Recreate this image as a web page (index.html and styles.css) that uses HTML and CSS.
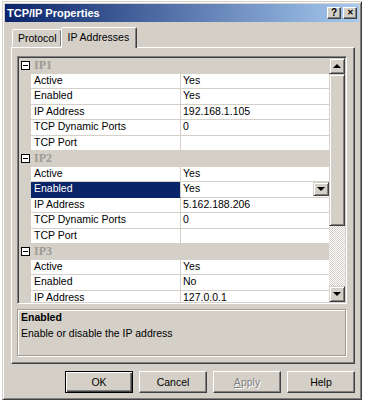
FILE: index.html
```html
<!DOCTYPE html>
<html>
<head>
    <title>TCP/IP Properties</title>
    <meta name="viewport" content="width=device-width, initial-scale=1">
    <link rel="stylesheet" href="styles.css">
</head>
<body>
    <div class="dialog">
        <div class="titlebar">
            <span class="title">TCP/IP Properties</span>
            <span class="caption-btn">?</span>
            <span class="caption-btn close">&#x2715;</span>
        </div>

        <div class="content">
            <div class="tabs">
                <div class="tab">Protocol</div>
                <div class="tab active">IP Addresses</div>
            </div>

            <div class="panel">
                <div class="grid">
                    <div class="rows">
                        <div class="row cat"><span class="margin"><i class="box"></i></span><span class="name">IP1</span><span class="value"></span></div>
                        <div class="row"><span class="margin"></span><span class="name">Active</span><span class="value">Yes</span></div>
                        <div class="row"><span class="margin"></span><span class="name">Enabled</span><span class="value">Yes</span></div>
                        <div class="row"><span class="margin"></span><span class="name">IP Address</span><span class="value">192.168.1.105</span></div>
                        <div class="row"><span class="margin"></span><span class="name">TCP Dynamic Ports</span><span class="value">0</span></div>
                        <div class="row"><span class="margin"></span><span class="name">TCP Port</span><span class="value"></span></div>

                        <div class="row cat"><span class="margin"><i class="box"></i></span><span class="name">IP2</span><span class="value"></span></div>
                        <div class="row"><span class="margin"></span><span class="name">Active</span><span class="value">Yes</span></div>
                        <div class="row selected"><span class="margin"></span><span class="name">Enabled</span><span class="value">Yes<span class="drop"><i class="arrow down"></i></span></span></div>
                        <div class="row"><span class="margin"></span><span class="name">IP Address</span><span class="value">5.162.188.206</span></div>
                        <div class="row"><span class="margin"></span><span class="name">TCP Dynamic Ports</span><span class="value">0</span></div>
                        <div class="row"><span class="margin"></span><span class="name">TCP Port</span><span class="value"></span></div>

                        <div class="row cat"><span class="margin"><i class="box"></i></span><span class="name">IP3</span><span class="value"></span></div>
                        <div class="row"><span class="margin"></span><span class="name">Active</span><span class="value">Yes</span></div>
                        <div class="row"><span class="margin"></span><span class="name">Enabled</span><span class="value">No</span></div>
                        <div class="row"><span class="margin"></span><span class="name">IP Address</span><span class="value">127.0.0.1</span></div>
                    </div>
                    <div class="scrollbar">
                        <div class="sbtn"><i class="arrow up"></i></div>
                        <div class="thumb"></div>
                        <div class="track"></div>
                        <div class="sbtn"><i class="arrow down"></i></div>
                    </div>
                </div>

                <div class="desc">
                    <div class="desc-title">Enabled</div>
                    <div class="desc-text">Enable or disable the IP address</div>
                </div>
            </div>

            <div class="buttons">
                <button class="btn default">OK</button>
                <button class="btn">Cancel</button>
                <button class="btn disabled"><u>A</u>pply</button>
                <button class="btn">Help</button>
            </div>
        </div>
    </div>
</body>
</html>
```

FILE: styles.css
```css
body {
    margin: 0;
    background-color: #ffffff;
    font-family: "Liberation Sans", Arial, sans-serif;
    font-size: 10.5px;
    color: #000000;
}

.dialog {
    width: 360px;
    height: 399px;
    margin: 1px 0 0 2px;
    box-sizing: border-box;
    background-color: #d4d0c8;
    border: 1px solid;
    border-color: #d4d0c8 #404040 #404040 #d4d0c8;
    box-shadow: inset 1px 1px #ffffff, inset -1px -1px #808080;
    padding: 2px;
}

.titlebar {
    height: 18px;
    display: flex;
    align-items: center;
    gap: 2px;
    padding: 0 2px 0 2px;
    background: linear-gradient(to right, #0a246a, #a6caf0);
}

.title {
    flex: 1;
    color: #ffffff;
    font-weight: bold;
    font-size: 11px;
}

.caption-btn {
    width: 14px;
    height: 12px;
    box-sizing: border-box;
    background-color: #d4d0c8;
    border: 1px solid;
    border-color: #ffffff #404040 #404040 #ffffff;
    box-shadow: inset -1px -1px #808080;
    font-weight: bold;
    font-size: 10px;
    line-height: 10px;
    text-align: center;
}

.caption-btn.close {
    font-size: 8px;
}

.content {
    padding: 5px 4px 0 6px;
}

.tabs {
    display: flex;
    align-items: flex-end;
    height: 20px;
    padding-left: 1px;
    position: relative;
    z-index: 1;
}

.tab {
    height: 17px;
    line-height: 16px;
    padding: 0 4px 0 5px;
    box-sizing: border-box;
    border: 1px solid;
    border-bottom: none;
    border-color: #ffffff #404040 transparent #ffffff;
    box-shadow: inset -1px 0 #808080;
    border-radius: 2px 2px 0 0;
    margin-bottom: 1px;
}

.tab.active {
    height: 21px;
    line-height: 18px;
    padding: 0 7px 0 6px;
    margin-left: -1px;
    margin-bottom: -1px;
    background-color: #d4d0c8;
}

.panel {
    height: 317px;
    box-sizing: border-box;
    border: 1px solid;
    border-color: #ffffff #404040 #404040 #ffffff;
    box-shadow: inset -1px -1px #808080;
    padding: 8px 7px 6px 5px;
    display: flex;
    flex-direction: column;
    gap: 5px;
}

.grid {
    height: 248px;
    box-sizing: border-box;
    border: 1px solid;
    border-color: #808080 #ffffff #ffffff #808080;
    box-shadow: inset 1px 1px #404040, inset -1px -1px #d4d0c8;
    padding: 1px;
    display: flex;
    background-color: #ffffff;
}

.rows {
    flex: 1;
    overflow: hidden;
}

.row {
    display: grid;
    grid-template-columns: 12px 150px 1fr;
    height: 15.5px;
    line-height: 13px;
}

.row .margin {
    background-color: #d4d0c8;
    position: relative;
}

.row .name {
    padding-left: 3px;
    border-right: 1px solid #d4d0c8;
    border-bottom: 1px solid #d4d0c8;
    white-space: nowrap;
}

.row .value {
    padding-left: 2px;
    border-bottom: 1px solid #d4d0c8;
    position: relative;
}

.row.cat .name,
.row.cat .value {
    background-color: #d4d0c8;
    border-right: none;
}

.row.cat .name {
    font-family: "Liberation Serif", "Times New Roman", serif;
    font-weight: bold;
    font-size: 12px;
    line-height: 15px;
    color: #9c9a94;
}

.box {
    position: absolute;
    left: 2px;
    top: 3px;
    width: 9px;
    height: 9px;
    box-sizing: border-box;
    border: 1px solid #000000;
    background-color: #ffffff;
}

.box::after {
    content: "";
    position: absolute;
    left: 1px;
    top: 3px;
    width: 5px;
    height: 1px;
    background-color: #000000;
}

.row.selected .name {
    background-color: #0a246a;
    color: #ffffff;
    border-bottom-color: #0a246a;
}

.drop {
    position: absolute;
    right: 0;
    top: 0;
    width: 16px;
    height: 14px;
    box-sizing: border-box;
    background-color: #d4d0c8;
    border: 1px solid;
    border-color: #d4d0c8 #404040 #404040 #d4d0c8;
    box-shadow: inset 1px 1px #ffffff, inset -1px -1px #808080;
    display: flex;
    align-items: center;
    justify-content: center;
}

.arrow {
    width: 0;
    height: 0;
    border-left: 4px solid transparent;
    border-right: 4px solid transparent;
}

.arrow.down {
    border-top: 4px solid #000000;
}

.arrow.up {
    border-bottom: 4px solid #000000;
}

.scrollbar {
    width: 16px;
    display: flex;
    flex-direction: column;
}

.sbtn,
.thumb {
    background-color: #d4d0c8;
    box-sizing: border-box;
    border: 1px solid;
    border-color: #d4d0c8 #404040 #404040 #d4d0c8;
    box-shadow: inset 1px 1px #ffffff, inset -1px -1px #808080;
}

.sbtn {
    height: 16px;
    display: flex;
    align-items: center;
    justify-content: center;
}

.thumb {
    height: 152px;
}

.track {
    flex: 1;
    background: repeating-conic-gradient(#d4d0c8 0 25%, #ffffff 0 50%) 0 0 / 2px 2px;
}

.desc {
    flex: 1;
    border: 1px solid;
    border-color: #a09c94 #ffffff #ffffff #a09c94;
    box-shadow: inset -1px -1px #a09c94, inset 1px 1px #ffffff;
    padding: 0 3px;
}

.desc-title {
    font-weight: bold;
    height: 16px;
    line-height: 14px;
}

.desc-text {
    line-height: 14px;
}

.buttons {
    display: flex;
    justify-content: flex-end;
    gap: 6px;
    padding-top: 7px;
}

.btn {
    width: 68px;
    height: 22px;
    box-sizing: border-box;
    font-family: "Liberation Sans", Arial, sans-serif;
    font-size: 10.5px;
    color: #000000;
    background-color: #d4d0c8;
    border: 1px solid;
    border-color: #ffffff #404040 #404040 #ffffff;
    box-shadow: inset -1px -1px #808080;
    padding: 0;
}

.btn.default {
    border-color: #000000;
    box-shadow: inset 1px 1px #ffffff, inset -1px -1px #404040, inset -2px -2px #808080;
}

.btn.disabled {
    color: #808080;
    text-shadow: 1px 1px #ffffff;
}
```
